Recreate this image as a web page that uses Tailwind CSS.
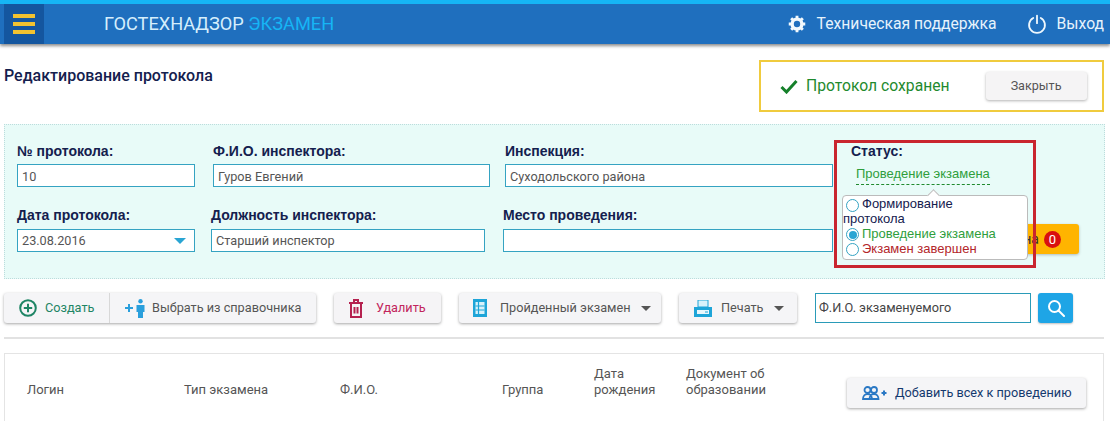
<!DOCTYPE html>
<html lang="ru">
<head>
  <meta charset="UTF-8" />
  <title>Редактирование протокола</title>
  <script src="https://cdn.jsdelivr.net/npm/@tailwindcss/browser@4"></script>
</head>
<body class="bg-white text-[#444] font-['Roboto',sans-serif] w-[1110px] h-[421px] overflow-hidden">

  <!-- шапка -->
  <header class="h-[44px] border-t-4 border-[#16b5f5] bg-[#1f6fbe] shadow-[0_2px_3px_rgba(0,0,0,0.45)] flex items-center pl-[4px] pr-[6px] relative z-10">
    <button class="w-[40px] h-[40px] bg-[#14569f] flex flex-col items-center justify-center gap-[4px]">
      <span class="block w-[22px] h-[4px] bg-[#f2c230]"></span>
      <span class="block w-[22px] h-[4px] bg-[#f2c230]"></span>
      <span class="block w-[22px] h-[4px] bg-[#f2c230]"></span>
    </button>
    <div class="ml-[60px] text-[18.2px] text-[#d5eefc]">ГОСТЕХНАДЗОР <span class="text-[#16b5f5]">ЭКЗАМЕН</span></div>
    <div class="ml-auto flex items-center text-[15.7px] text-[#e6f3fc]">
      <svg class="w-[18px] h-[18px]" viewBox="0 0 24 24" fill="none" stroke="#f2f9fd">
        <circle cx="12" cy="12" r="6.500" stroke-width="4.500"/>
        <path d="M12 1v4M12 19v4M1 12h4M19 12h4M4.200 4.200l2.900 2.900M16.900 16.900l2.900 2.900M4.200 19.800l2.900-2.900M16.900 7.100l2.900-2.900" stroke-width="3.800"/>
      </svg>
      <span class="ml-[11px]">Техническая поддержка</span>
      <svg class="ml-[30px] w-[20px] h-[20px]" viewBox="0 0 24 24" fill="none" stroke="#eef7fd" stroke-width="2.200" stroke-linecap="round">
        <path d="M7.500 4.800a9.500 9.500 0 1 0 9 0"/>
        <path d="M12 2v9"/>
      </svg>
      <span class="ml-[10px]">Выход</span>
    </div>
  </header>

  <div class="flex justify-between pl-[4px] pr-[6px] pt-[16px]">
    <h1 class="text-[16px] leading-[20px] mt-[6px] font-medium text-[#14204e]">Редактирование протокола</h1>
    <!-- сообщение -->
    <div class="w-[345px] h-[52px] border-2 border-[#f0cb3e] flex items-center pl-[19px]">
      <svg class="w-[18px] h-[15px]" viewBox="0 0 18 15" fill="none" stroke="#15802a" stroke-width="3"><path d="M1.500 8l5 5L16.500 2"/></svg>
      <span class="ml-[8px] text-[15.7px] text-[#1f8a2e]">Протокол сохранен</span>
      <button class="ml-[36px] w-[101px] h-[28px] bg-[#f5f4f5] rounded-[3px] text-[12.6px] text-[#555] shadow-[0_1px_3px_rgba(0,0,0,0.3)]">Закрыть</button>
    </div>
  </div>

  <!-- форма протокола -->
  <section class="relative ml-[4px] mt-[12px] w-[1101px] h-[155px] bg-[#e8fbf8] border border-dotted border-[#bcdcdc] pl-[12px] pt-[18px]">
    <div class="flex">
      <div class="w-[178px]">
        <label class="block font-['Liberation_Sans',sans-serif] font-bold text-[14px] leading-[16px] mb-[5px] text-[#14204e]">№ протокола:</label>
        <input value="10" class="block w-full h-[23px] bg-white border border-[#35a3c2] px-[4px] pt-[2px] text-[12.7px] text-[#555]" />
      </div>
      <div class="w-[277px] ml-[18px]">
        <label class="block font-['Liberation_Sans',sans-serif] font-bold text-[14px] leading-[16px] mb-[5px] text-[#14204e]">Ф.И.О. инспектора:</label>
        <input value="Гуров Евгений" class="block w-full h-[23px] bg-white border border-[#35a3c2] px-[4px] pt-[2px] text-[12.7px] text-[#555]" />
      </div>
      <div class="w-[328px] ml-[15px]">
        <label class="block font-['Liberation_Sans',sans-serif] font-bold text-[14px] leading-[16px] mb-[5px] text-[#14204e]">Инспекция:</label>
        <input value="Суходольского района" class="block w-full h-[23px] bg-white border border-[#35a3c2] px-[4px] pt-[2px] text-[12.7px] text-[#555]" />
      </div>
    </div>
    <div class="flex mt-[20px]">
      <div class="w-[178px]">
        <label class="block font-['Liberation_Sans',sans-serif] font-bold text-[14px] leading-[16px] mb-[6px] text-[#14204e]">Дата протокола:</label>
        <div class="flex items-center justify-between h-[23px] bg-white border border-[#35a3c2] pl-[4px] pr-[8px] text-[12.7px] text-[#555]">
          23.08.2016
          <span class="w-0 h-0 border-x-[6px] border-x-transparent border-t-[6px] border-t-[#2aa5d3]"></span>
        </div>
      </div>
      <div class="w-[274px] ml-[16px]">
        <label class="block font-['Liberation_Sans',sans-serif] font-bold text-[14px] leading-[16px] mb-[6px] text-[#14204e]">Должность инспектора:</label>
        <input value="Старший инспектор" class="block w-full h-[23px] bg-white border border-[#35a3c2] px-[4px] text-[12.7px] text-[#555]" />
      </div>
      <div class="w-[330px] ml-[18px]">
        <label class="block font-['Liberation_Sans',sans-serif] font-bold text-[14px] leading-[16px] mb-[6px] text-[#14204e]">Место проведения:</label>
        <input class="block w-full h-[23px] bg-white border border-[#35a3c2] px-[4px] text-[12.7px] text-[#555]" />
      </div>
    </div>

    <!-- кнопка под всплывающим окном -->
    <button class="absolute left-[996px] top-[99px] w-[78px] h-[30px] bg-[#ffb400] rounded-[3px] shadow-[0_1px_3px_rgba(0,0,0,0.25)] flex items-center justify-end pr-[18px] text-[14px] text-[#333]">
      на
      <span class="ml-[5px] w-[17px] h-[17px] rounded-full bg-[#d90f0f] text-white text-[13px] leading-[17px] text-center">0</span>
    </button>

    <!-- выделение статуса -->
    <div class="absolute left-[829px] top-[15px] w-[202px] h-[128px] border-[3px] border-[#c9252f] pl-[14px] font-['Liberation_Sans',sans-serif]">
      <div class="font-bold text-[14px] leading-[16px] text-[#14204e]">Статус:</div>
      <span class="inline-block mt-[7px] ml-[5px] text-[13px] leading-[15px] pb-[3px] text-[#2f9e3c] border-b border-dashed border-[#1f8a2e]">Проведение экзамена</span>
      <div class="absolute left-[5px] top-[52px] w-[186px] h-[65px] bg-white border border-[#bbb] rounded-[4px] text-[13px] leading-[15px] text-[#14204e]">
        <span class="absolute left-[86px] top-[-5px] w-[9px] h-[9px] bg-white border-l border-t border-[#bbb] rotate-45"></span>
        <div class="relative h-[30px]"><span class="inline-block relative top-[3px] align-top w-[13px] h-[13px] rounded-full bg-white border border-[#35a3c2] ml-[3px] mr-[3px]"></span>Формирование<br />протокола</div>
        <div class="relative h-[15px] text-[#2f9e3c]"><span class="inline-flex items-center justify-center relative top-[2px] align-top w-[13px] h-[13px] rounded-full bg-white border border-[#35a3c2] ml-[3px] mr-[3px]"><span class="block w-[8px] h-[8px] rounded-full bg-[#2aa5d3]"></span></span>Проведение экзамена</div>
        <div class="relative h-[15px] text-[#b3262a]"><span class="inline-block relative top-[2px] align-top w-[13px] h-[13px] rounded-full bg-white border border-[#35a3c2] ml-[3px] mr-[3px]"></span>Экзамен завершен</div>
      </div>
    </div>
  </section>

  <!-- панель действий -->
  <div class="flex items-center ml-[4px] mt-[14px] h-[30px] text-[12.7px] text-[#555]">
    <div class="flex h-[30px] w-[312px] bg-[#f5f5f7] rounded-[3px] shadow-[0_1px_3px_rgba(0,0,0,0.35)]">
      <button class="w-[106px] flex items-center pl-[15px] border-r border-[#d8d8d8] text-[#1e8565]">
        <svg class="w-[18px] h-[18px]" viewBox="0 0 18 18" fill="none" stroke="#1e8565" stroke-width="2"><circle cx="9" cy="9" r="7.800"/><path d="M9 4.800v8.400M4.800 9h8.400"/></svg>
        <span class="ml-[8px]">Создать</span>
      </button>
      <button class="flex-1 flex items-center pl-[15px]">
        <svg class="w-[21px] h-[19px]" viewBox="0 0 21 19" fill="#2a9fdc"><path d="M0 8h3V5h2v3h3v2H5v3H3v-3H0z"/><circle cx="15.500" cy="2.200" r="2.200"/><path d="M11.500 6h8v7h-1.500v6h-5v-6h-1.500z"/></svg>
        <span class="ml-[6px]">Выбрать из справочника</span>
      </button>
    </div>
    <button class="ml-[18px] w-[107px] h-[30px] flex items-center pl-[15px] bg-[#f5f4f6] rounded-[3px] shadow-[0_1px_3px_rgba(0,0,0,0.35)] text-[#c2255c]">
      <svg class="w-[14px] h-[19px]" viewBox="0 0 14 19" fill="none" stroke="#b5214f" stroke-width="2"><path d="M0 4h14M5 4V1h4v3"/><path d="M2 4v14h10V4M5.500 8v6.500M8.500 8v6.500"/></svg>
      <span class="ml-[13px]">Удалить</span>
    </button>
    <button class="ml-[18px] w-[202px] h-[30px] flex items-center pl-[14px] bg-[#f5f5f7] rounded-[3px] shadow-[0_1px_3px_rgba(0,0,0,0.35)]">
      <svg class="w-[14px] h-[18px]" viewBox="0 0 14 18"><rect width="14" height="18" fill="#1ea5d8"/><path d="M2.500 3h9v12h-9z" fill="#d8f2fb"/><path d="M2.500 7h9M2.500 11h9M5.500 3v12" stroke="#1ea5d8" stroke-width="1.200"/></svg>
      <span class="ml-[13px]">Пройденный экзамен</span>
      <span class="ml-[10px] w-0 h-0 border-x-[5px] border-x-transparent border-t-[5px] border-t-[#555]"></span>
    </button>
    <button class="ml-[18px] w-[118px] h-[30px] flex items-center pl-[15px] bg-[#f5f5f7] rounded-[3px] shadow-[0_1px_3px_rgba(0,0,0,0.35)]">
      <svg class="w-[18px] h-[17px]" viewBox="0 0 18 17"><path d="M4 0h10v7H4z" fill="#d8f2fb" stroke="#1ea5d8"/><path d="M0 7h18v10H0z" fill="#1ea5d8"/><path d="M3 10h12v4H3z" fill="#e9f7fc"/><path d="M11 12h3" stroke="#1ea5d8"/></svg>
      <span class="ml-[9px]">Печать</span>
      <span class="ml-[11px] w-0 h-0 border-x-[5px] border-x-transparent border-t-[5px] border-t-[#555]"></span>
    </button>
    <div class="ml-[18px] w-[216px] h-[30px] border border-[#2a9bb8] flex items-center pl-[3px] text-[#444]">Ф.И.О. экзаменуемого</div>
    <button class="ml-[7px] w-[35px] h-[30px] rounded-[3px] bg-[#1ea5e6] shadow-[0_1px_2px_rgba(0,0,0,0.25)] flex items-center justify-center">
      <svg class="w-[18px] h-[18px]" viewBox="0 0 18 18" fill="none" stroke="#fff" stroke-width="2"><circle cx="7.500" cy="7.500" r="5.500"/><path d="M11.500 11.500L17 17" stroke-linecap="round"/></svg>
    </button>
  </div>

  <div class="ml-[4px] mr-[6px] mt-[14px] h-[2px] bg-[#e2e2e2]"></div>

  <!-- таблица -->
  <div class="ml-[4px] mr-[6px] mt-[14px] h-[80px] border border-[#e4e4e4] flex items-start text-[13px] leading-[16px] text-[#555]">
    <div class="w-[179px] pl-[22px] mt-[28px]">Логин</div>
    <div class="w-[156px] mt-[28px]">Тип экзамена</div>
    <div class="w-[162px] mt-[28px]">Ф.И.О.</div>
    <div class="w-[92px] mt-[28px]">Группа</div>
    <div class="w-[92px] mt-[12px]">Дата<br />рождения</div>
    <div class="w-[161px] mt-[12px]">Документ об<br />образовании</div>
    <button class="w-[239px] h-[30px] mt-[24px] flex items-center pl-[15px] bg-[#f5f5f7] rounded-[3px] shadow-[0_1px_3px_rgba(0,0,0,0.35)] text-[12.7px] text-[#14396e]">
      <svg class="w-[25px] h-[14px]" viewBox="0 0 25 14" fill="none" stroke="#2a78c4" stroke-width="1.800"><circle cx="5.500" cy="4" r="3"/><circle cx="12" cy="4" r="3"/><path d="M1 13c0-3 2-5 4.500-5S10 10 10 13zM7.500 13c0-3 2-5 4.500-5s4.500 2 4.500 5z"/><path d="M19.500 7h5M22 4.500v5" stroke-width="2"/></svg>
      <span class="ml-[8px]">Добавить всех к проведению</span>
    </button>
  </div>
</body>
</html>
